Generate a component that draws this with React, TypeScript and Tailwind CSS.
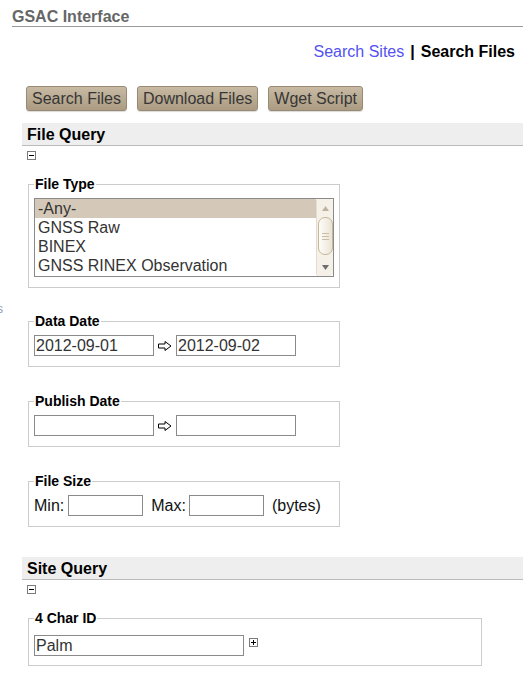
import React from 'react';

const inputCls =
  'h-[21px] border border-[#8a8a8a] bg-white px-[1px] text-[16px] leading-[19px] text-[#333] outline-none';

function Toggle({ open = true }: { open?: boolean }) {
  return (
    <svg width="9" height="9" viewBox="0 0 9 9" className="block">
      <rect x="0.5" y="0.5" width="8" height="8" fill="#fff" stroke="#7a7a7a" />
      <line x1="2" y1="4.5" x2="7" y2="4.5" stroke="#000" />
      {!open && <line x1="4.5" y1="2" x2="4.5" y2="7" stroke="#000" />}
    </svg>
  );
}

function Arrow() {
  return (
    <svg width="14" height="10" viewBox="0 0 14 10" className="mx-[4px] block">
      <polygon points="0.5,3 7,3 7,0.5 13,5 7,9.5 7,7 0.5,7" fill="#fff" stroke="#000" />
    </svg>
  );
}

function SectionHeader({ title }: { title: string }) {
  return (
    <div className="border-b border-[#bbb] bg-[#eee] pl-[5px] pt-[3px] pb-[1px] text-[16px] font-bold leading-[18px] text-black">
      {title}
    </div>
  );
}

function Legend({ children }: { children: React.ReactNode }) {
  return <legend className="px-[1px] text-[14px] font-bold leading-[16px] text-black">{children}</legend>;
}

function ScrollBar() {
  return (
    <div className="flex h-full w-[17px] flex-col items-center rounded-[3px] border-l border-[#e4dccd] bg-[#f5f1e8]">
      <div className="flex h-[18px] items-center justify-center">
        <svg width="7" height="5" viewBox="0 0 7 5">
          <polygon points="3.5,0 7,5 0,5" fill="#bdb2a0" />
        </svg>
      </div>
      <div className="flex h-[38px] w-[15px] flex-col items-center justify-center gap-[2px] rounded-[7px] border border-[#c6b799] bg-gradient-to-r from-[#fdfcf8] to-[#ebe4d4]">
        <div className="h-px w-[7px] bg-[#c9bda6]" />
        <div className="h-px w-[7px] bg-[#c9bda6]" />
        <div className="h-px w-[7px] bg-[#c9bda6]" />
      </div>
      <div className="flex-1" />
      <div className="flex h-[18px] items-center justify-center">
        <svg width="7" height="5" viewBox="0 0 7 5">
          <polygon points="0,0 7,0 3.5,5" fill="#6f6f6f" />
        </svg>
      </div>
    </div>
  );
}

const fileTypes = ['-Any-', 'GNSS Raw', 'BINEX', 'GNSS RINEX Observation'];

export default function App() {
  return (
    <div className="min-h-screen bg-white font-['Liberation_Sans',Arial,sans-serif] text-black">
      {/* Title */}
      <div className="pl-[12px] pt-[8px]">
        <div className="border-b border-[#999] text-[16px] font-bold leading-[18px] text-[#666]">GSAC Interface</div>
      </div>

      {/* Nav */}
      <div className="mt-[16px] pr-[8px] text-right text-[16px] leading-[18px]">
        <span className="text-[#5252f2]">Search Sites</span>
        <span className="mx-[6px] font-bold">|</span>
        <span className="font-bold">Search Files</span>
      </div>

      <div className="pl-[22px]">
        {/* Buttons */}
        <div className="mt-[25px] flex gap-[10px] pl-[4px]">
          {['Search Files', 'Download Files', 'Wget Script'].map((b) => (
            <button
              key={b}
              className="h-[25px] rounded-[3px] border border-[#988a73] bg-gradient-to-b from-[#c8baa3] to-[#ab9b82] px-[5px] text-[16px] leading-[20px] text-[#363636] shadow-[0_1px_1px_rgba(0,0,0,0.15)]"
            >
              {b}
            </button>
          ))}
        </div>

        {/* File Query */}
        <div className="mt-[12px]">
          <SectionHeader title="File Query" />
        </div>
        <div className="ml-[5px] mt-[5px]">
          <Toggle />
        </div>

        <fieldset className="ml-[6px] mt-[16px] w-[312px] border border-[#ccc] px-[5px] pt-[6px] pb-[10px]">
          <Legend>File Type</Legend>
          <div className="flex h-[79px] w-[300px] border border-[#8a8a8a] bg-white">
            <div className="flex-1">
              {fileTypes.map((t, i) => (
                <div
                  key={t}
                  className={`h-[19px] pl-[3px] text-[16px] leading-[19px] text-[#333] ${i === 0 ? 'bg-[#d4c9b8]' : ''}`}
                >
                  {t}
                </div>
              ))}
            </div>
            <ScrollBar />
          </div>
        </fieldset>

        {/* stray label, clipped at the page edge */}
        <div className="h-0">
          <div className="-ml-[25px] pt-[15px] text-[12px] leading-[12px] text-[#8a9ab0]">s</div>
        </div>

        <fieldset className="ml-[6px] mt-[25px] w-[312px] border border-[#ccc] px-[5px] pt-[6px] pb-[10px]">
          <Legend>Data Date</Legend>
          <div className="flex items-center">
            <input className={`${inputCls} w-[120px]`} defaultValue="2012-09-01" />
            <Arrow />
            <input className={`${inputCls} w-[120px]`} defaultValue="2012-09-02" />
          </div>
        </fieldset>

        <fieldset className="ml-[6px] mt-[26px] w-[312px] border border-[#ccc] px-[5px] pt-[6px] pb-[10px]">
          <Legend>Publish Date</Legend>
          <div className="flex items-center">
            <input className={`${inputCls} w-[120px]`} />
            <Arrow />
            <input className={`${inputCls} w-[120px]`} />
          </div>
        </fieldset>

        <fieldset className="ml-[6px] mt-[26px] w-[312px] border border-[#ccc] px-[5px] pt-[6px] pb-[10px]">
          <Legend>File Size</Legend>
          <div className="flex items-center text-[16px] leading-[19px] text-[#111]">
            <span>Min:</span>
            <input className={`${inputCls} ml-[4px] w-[75px]`} />
            <span className="ml-[8px]">Max:</span>
            <input className={`${inputCls} ml-[3px] w-[75px]`} />
            <span className="ml-[8px]">(bytes)</span>
          </div>
        </fieldset>

        {/* Site Query */}
        <div className="mt-[30px]">
          <SectionHeader title="Site Query" />
        </div>
        <div className="ml-[5px] mt-[5px]">
          <Toggle />
        </div>

        <fieldset className="ml-[6px] mt-[16px] w-[454px] border border-[#ccc] px-[5px] pt-[9px] pb-[9px]">
          <Legend>4 Char ID</Legend>
          <div className="flex items-start">
            <input className={`${inputCls} w-[210px]`} defaultValue="Palm" />
            <div className="ml-[5px] mt-[3px]">
              <Toggle open={false} />
            </div>
          </div>
        </fieldset>
      </div>
    </div>
  );
}
